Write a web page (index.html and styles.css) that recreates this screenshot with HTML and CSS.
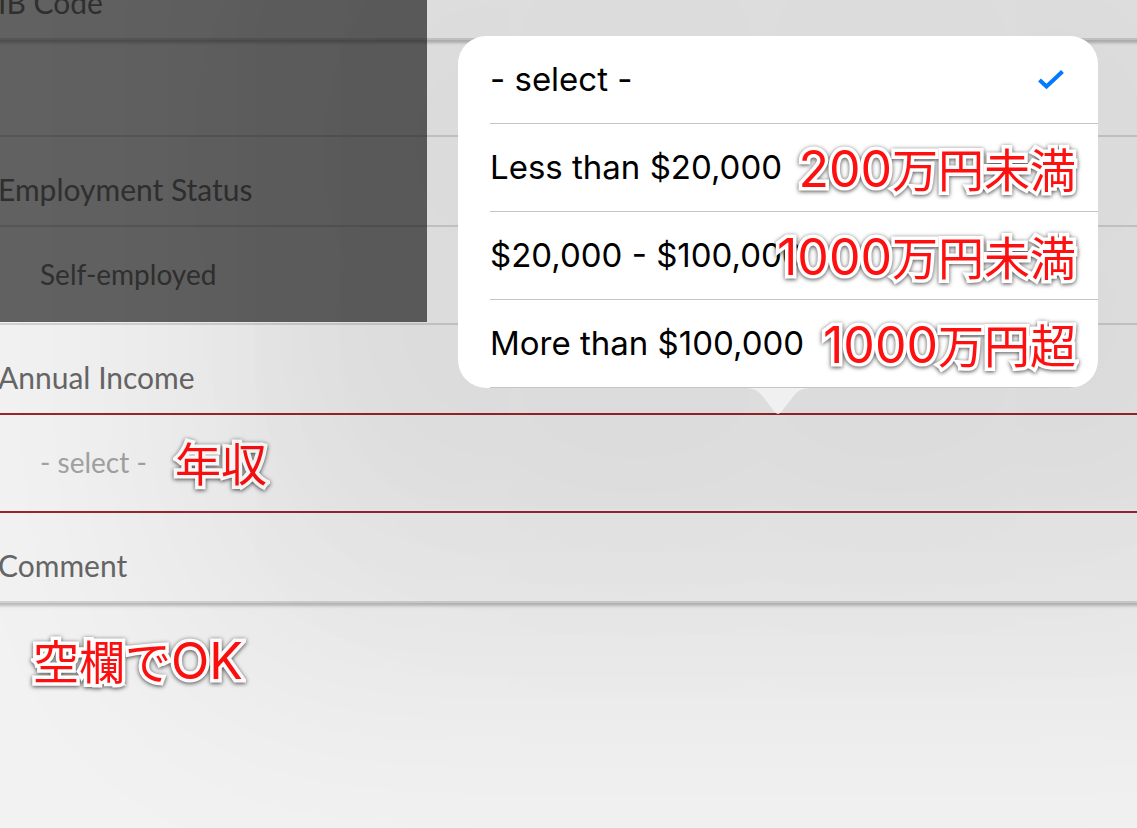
FILE: index.html
```html
<!DOCTYPE html>
<html lang="en">
<head>
    <meta charset="UTF-8">
    <meta name="viewport" content="width=device-width, initial-scale=1.0">
    <title>Account Application</title>
    <link rel="stylesheet" href="styles.css">
</head>
<body>

    <form class="form">
        <label class="label label-first" for="ib-code">IB Code</label>
        <input class="field field-ib" id="ib-code" type="text">

        <label class="label" for="employment">Employment Status</label>
        <select class="field field-employment" id="employment">
            <option>Self-employed</option>
        </select>

        <label class="label" for="income">Annual Income</label>
        <div class="field-wrap">
            <select class="field field-error" id="income">
                <option>- select -</option>
                <option>Less than $20,000</option>
                <option>$20,000 - $100,000</option>
                <option>More than $100,000</option>
            </select>
            <span class="note note-income" lang="ja">年収</span>
        </div>

        <label class="label" for="comment">Comment</label>
        <div class="field-wrap comment-wrap">
            <textarea class="field field-comment" id="comment"></textarea>
            <span class="note note-comment" lang="ja">空欄で<span class="latin">OK</span></span>
        </div>
    </form>

    <div class="mask"></div>

    <div class="popover">
        <ul class="options">
            <li class="option">
                <button type="button" class="option-btn">- select -</button>
                <svg class="check" viewBox="0 0 26 20" aria-hidden="true">
                    <path d="M1.500 10 L8.500 16.500 L24.500 1.500" fill="none" stroke="#007aff" stroke-width="4"/>
                </svg>
            </li>
            <li class="option">
                <button type="button" class="option-btn">Less than $20,000</button>
                <span class="note note-option" lang="ja"><span class="latin">200</span>万円未満</span>
            </li>
            <li class="option">
                <button type="button" class="option-btn">$20,000 - $100,000</button>
                <span class="note note-option" lang="ja"><span class="latin">1000</span>万円未満</span>
            </li>
            <li class="option">
                <button type="button" class="option-btn">More than $100,000</button>
                <span class="note note-option" lang="ja"><span class="latin">1000</span>万円超</span>
            </li>
        </ul>
        <svg class="arrow" viewBox="0 0 64 27" aria-hidden="true">
            <path d="M0 0 H64 C52 1 50 5 46 10 L36 23 Q32 29 28 23 L18 10 C14 5 12 1 0 0 Z" fill="#f0f0f0"/>
        </svg>
    </div>

</body>
</html>
```
FILE: styles.css
```css
* {
    box-sizing: border-box;
}

body {
    position: relative;
    margin: 0;
    min-height: 100vh;
    overflow: hidden;
    background-color: #f2f2f2;
    font-family: Lato, sans-serif;
    color: #666;
}

.form {
    display: flex;
    flex-direction: column;
    min-height: 100vh;
}

.label {
    height: 88px;
    margin-left: -2px;
    padding-top: 12px;
    font-size: 30px;
    line-height: 80px;
    white-space: nowrap;
}

/* scrolled half out of view */
.label-first {
    margin-top: -50px;
}

.field {
    display: block;
    width: 100%;
    margin: 0;
    padding: 0 40px;
    border: 0 solid #d2d2d2;
    border-radius: 0;
    outline: none;
    appearance: none;
    background: transparent;
    font-family: Lato, sans-serif;
    font-size: 28px;
    color: #666;
}

.field-ib {
    height: 99px;
    border-width: 2px 0;
    box-shadow: inset 0 7px 3px -4px #bbb;
}

.field-employment {
    height: 100px;
    padding-bottom: 2px;
    border-width: 2px 0;
}

.field-wrap {
    position: relative;
}

.field-error {
    height: 100px;
    padding-bottom: 2px;
    border-width: 2px 0;
    border-color: #9a272e;
    color: #a2a2a2;
}

.comment-wrap {
    flex: 1;
    display: flex;
}

.field-comment {
    border-top-width: 2px;
    box-shadow: inset 0 7px 3px -4px #bbb;
    resize: none;
}

/* dark cover over the fields that are already done */
.mask {
    position: absolute;
    top: 0;
    left: 0;
    width: 427px;
    height: 322px;
    background-color: rgba(20, 20, 20, 0.65);
}

.popover {
    position: absolute;
    top: 36px;
    right: 39px;
    width: 640px;
    border-radius: 28px;
    background-color: #fff;
    box-shadow: 0 0 260px 130px rgba(0, 0, 0, 0.05),
                0 0 260px 300px rgba(0, 0, 0, 0.06);
}

.options {
    margin: 0;
    padding: 0 0 0 32px;
    border-radius: 28px;
    overflow: hidden;
    list-style: none;
}

.option {
    position: relative;
    display: flex;
    align-items: center;
    height: 88px;
    border-bottom: 1px solid #c4c4c4;
}

.option-btn {
    flex: 1;
    height: 100%;
    padding: 0 0 2px;
    border: none;
    background: none;
    font-family: Inter, sans-serif;
    font-size: 33px;
    text-align: left;
    color: #000;
}

.check {
    width: 26px;
    height: 20px;
    margin-right: 34px;
}

.arrow {
    position: absolute;
    top: 100%;
    left: 50%;
    width: 64px;
    height: 27px;
    margin-left: -32px;
}

.note {
    position: absolute;
    font-family: "Noto Sans CJK JP", sans-serif;
    font-size: 46px;
    font-weight: 400;
    line-height: 60px;
    white-space: nowrap;
    color: #ff1010;
    -webkit-text-stroke: 7px #fff;
    paint-order: stroke fill;
    filter: drop-shadow(0 1px 2px rgba(0, 0, 0, 0.7));
    pointer-events: none;
}

.latin {
    font-family: Inter, sans-serif;
    font-size: 50px;
}

.note-option {
    top: 13px;
    right: 22px;
}

.note-income {
    top: 18px;
    left: 175px;
}

.note-comment {
    top: 28px;
    left: 33px;
}
```
